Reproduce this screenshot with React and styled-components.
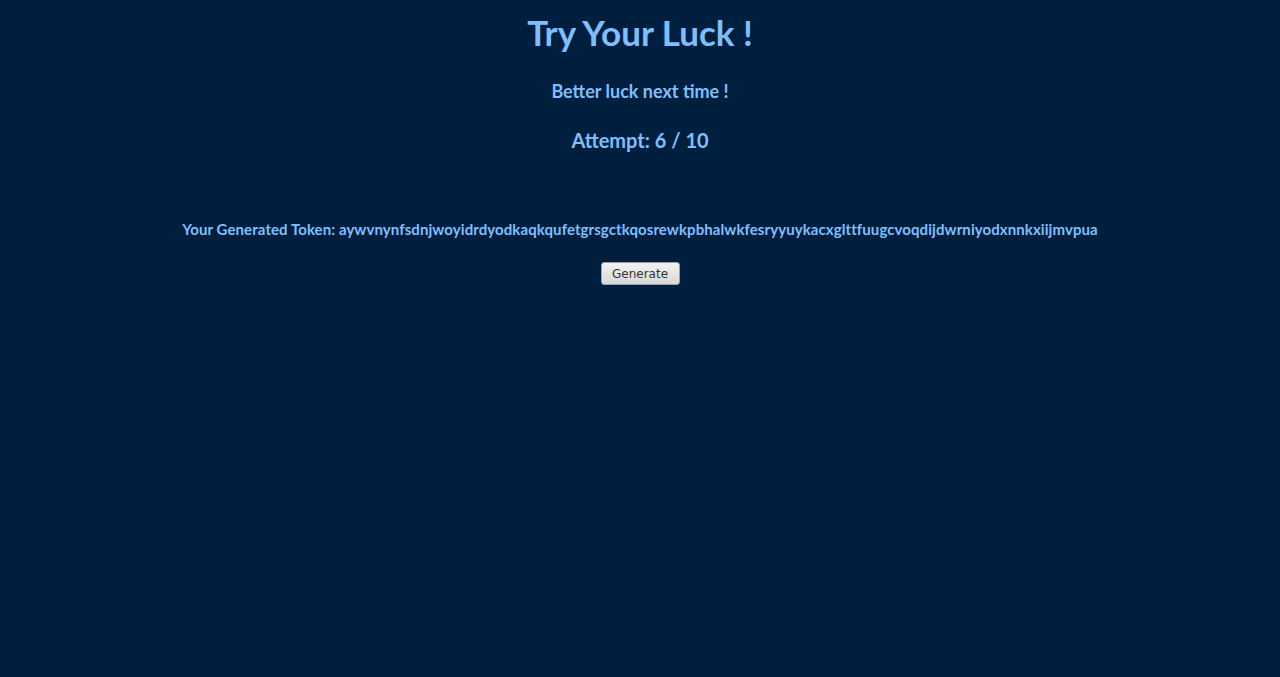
import styled, { createGlobalStyle } from 'styled-components';

const GlobalStyle = createGlobalStyle`
  html, body {
    margin: 0;
    padding: 0;
    background-color: #001f3f;
  }
  body {
    font-family: Lato, "Open Sans", sans-serif;
    min-height: 677px;
  }
`;

const token =
  'aywvnynfsdnjwoyidrdyodkaqkqufetgrsgctkqosrewkpbhalwkfesryyuykacxglttfuugcvoqdijdwrniyodxnnkxiijmvpua';

const App = () => {
  return (
    <>
      <GlobalStyle />
      <Page>
        <Title>Try Your Luck !</Title>
        <Message>Better luck next time !</Message>
        <Attempt>Attempt: 6 / 10</Attempt>
        <Token>Your Generated Token: {token}</Token>
        <GenerateButton type="button">Generate</GenerateButton>
      </Page>
    </>
  );
};

const Page = styled.div`
  display: flex;
  flex-direction: column;
  align-items: center;
  padding-top: 10px;
  color: #7fbfff;
  text-align: center;
`;

const Title = styled.h1`
  margin: 0;
  font-size: 35px;
  line-height: 44px;
  font-weight: 700;
`;

const Message = styled.h3`
  margin: 26px 0 0;
  font-size: 18px;
  line-height: 22px;
  font-weight: 700;
`;

const Attempt = styled.h2`
  margin: 25px 0 0;
  font-size: 20px;
  line-height: 26px;
  font-weight: 700;
`;

const Token = styled.p`
  margin: 67px 0 0;
  font-size: 15px;
  line-height: 18px;
  letter-spacing: 0.08px;
  font-weight: 700;
`;

const GenerateButton = styled.button`
  margin-top: 24px;
  width: 79px;
  height: 23px;
  padding: 0;
  font-family: "DejaVu Sans", sans-serif;
  font-size: 12px;
  color: #333;
  background: linear-gradient(#f2f2f2, #d8d8d8);
  border: 1px solid #a0a0a0;
  border-radius: 3px;
  cursor: pointer;
`;

export default App;
